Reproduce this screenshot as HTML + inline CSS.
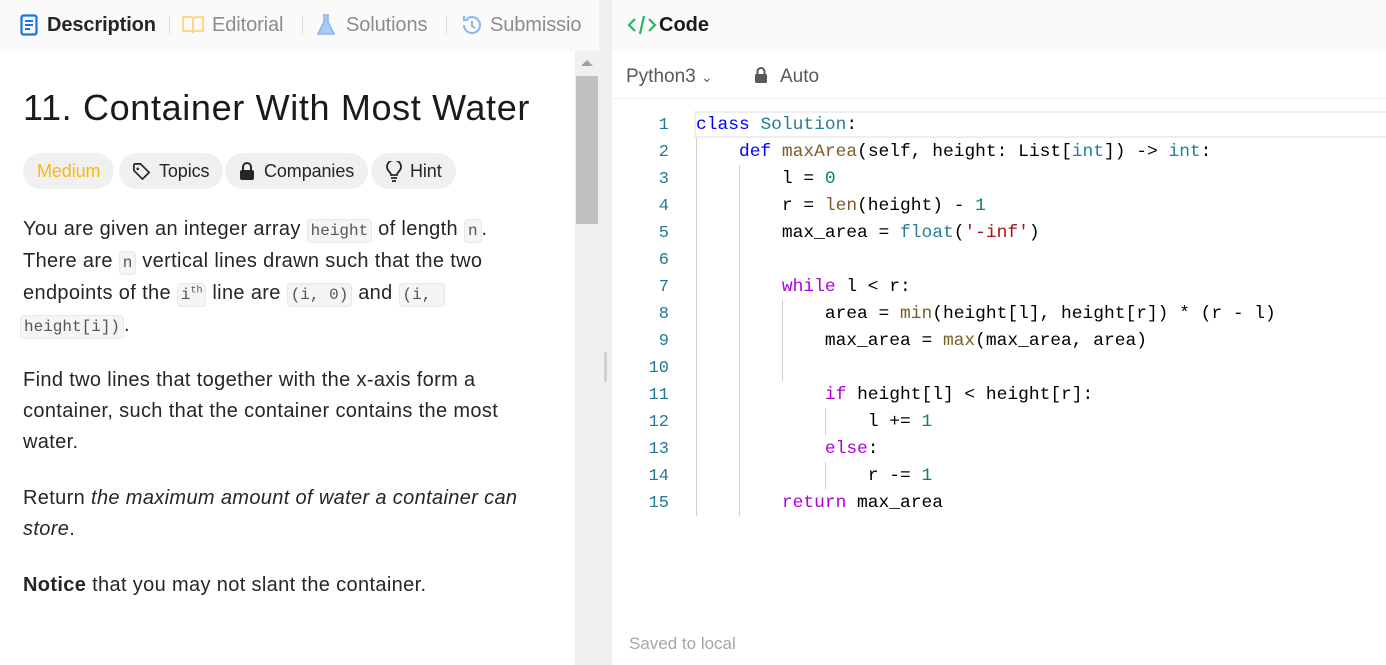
<!DOCTYPE html>
<html><head><meta charset="utf-8"><style>
*{margin:0;padding:0;box-sizing:border-box}
body{width:1386px;height:665px;overflow:hidden;background:#f0f0f0;font-family:"Liberation Sans",sans-serif;position:relative;color:#262626}
.a{position:absolute;white-space:nowrap}
.left{position:absolute;left:0;top:0;width:599px;height:665px;background:#fff}
.tabs{position:absolute;left:0;top:0;width:599px;height:51px;background:#fafafa}
.right{position:absolute;left:612px;top:0;width:774px;height:665px;background:#fff}
.rtop{position:absolute;left:0;top:0;width:774px;height:51px;background:#fafafa}
.tab{font-size:20px;color:#8c8c8c;top:14px;letter-spacing:-0.1px}
.sep{position:absolute;top:15px;width:1px;height:20px;background:#ddd}
.pill{position:absolute;top:153px;height:36px;border-radius:18px;background:#f0f0f0;font-size:18px;color:#262626;line-height:36px;padding:0 14px;letter-spacing:-0.1px}
.p{font-size:20px;letter-spacing:0.35px;color:#262626;left:23px}
code{font-family:"Liberation Mono",monospace;font-size:16px;background:#f5f5f5;border:1px solid #e8e8e8;border-radius:4px;padding:2px 3px;color:#555;letter-spacing:0}
.ln{position:absolute;left:612px;width:57px;text-align:right;font-family:"Liberation Mono",monospace;font-size:17px;color:#237893}
.cd{position:absolute;left:696px;font-family:"Liberation Mono",monospace;font-size:17.9px;color:#000;white-space:pre}
.k{color:#0000ff}.c{color:#267f99}.f{color:#795e26}.n{color:#098658}.s{color:#a31515}.m{color:#af00db}
.g{position:absolute;width:1px;background:#d0d0d0}
</style></head><body>
<div class="left">
<div class="tabs">
<svg class="a" style="left:20px;top:14px" width="18" height="22" viewBox="0 0 18 22"><rect x="1.5" y="1.5" width="15" height="19" rx="2" fill="none" stroke="#1a73e8" stroke-width="2.2"/><path d="M5 7h8M5 11h8M5 15h5" stroke="#1a73e8" stroke-width="2"/></svg>
<div class="a tab" style="left:47px;color:#262626;font-weight:600">Description</div>
<div class="sep" style="left:169px"></div>
<svg class="a" style="left:181px;top:15px" width="24" height="20" viewBox="0 0 24 20"><path d="M2 2h7c2 0 3 1 3 3v13c0-1-1-2-3-2H2zM22 2h-7c-2 0-3 1-3 3v13c0-1 1-2 3-2h7z" fill="none" stroke="#ffd37a" stroke-width="1.8"/></svg>
<div class="a tab" style="left:212px">Editorial</div>
<div class="sep" style="left:302px"></div>
<svg class="a" style="left:316px;top:13px" width="20" height="24" viewBox="0 0 20 24"><path d="M7 2h6M8 2v7L2 21h16L12 9V2" fill="#a8cdf5" stroke="#8ab8ec" stroke-width="1.6"/></svg>
<div class="a tab" style="left:346px">Solutions</div>
<div class="sep" style="left:446px"></div>
<svg class="a" style="left:460px;top:13px" width="24" height="24" viewBox="0 0 24 24"><path d="M4 12a8 8 0 1 0 3-6.2M4 3v4h4M12 8v5l3 2" fill="none" stroke="#8ab8ec" stroke-width="2"/></svg>
<div class="a tab" style="left:490px;width:92px;overflow:hidden">Submissions</div>
</div>
<div class="a" style="left:23px;top:87px;font-size:36px;font-weight:500;letter-spacing:0.65px;color:#1a1a1a">11. Container With Most Water</div>
<div class="pill" style="left:23px;color:#ffb800">Medium</div>
<div class="pill" style="left:119px;padding-left:40px">Topics<svg style="position:absolute;left:13px;top:9px" width="19" height="19" viewBox="0 0 20 20"><path d="M2 3v6l9 9 7-7-9-9H3zM6 6.5a.6.6 0 1 0 .1 0" fill="none" stroke="#262626" stroke-width="1.8"/></svg></div>
<div class="pill" style="left:225px;padding-left:39px">Companies<svg style="position:absolute;left:14px;top:9px" width="16" height="18" viewBox="0 0 16 18"><path d="M4 8V5a4 4 0 0 1 8 0v3" fill="none" stroke="#262626" stroke-width="2"/><rect x="1" y="8" width="14" height="10" rx="2" fill="#262626"/></svg></div>
<div class="pill" style="left:371px;padding-left:39px">Hint<svg style="position:absolute;left:15px;top:8px" width="16" height="21" viewBox="0 0 16 21"><path d="M5 14c0-3-4-4-4-8a7 7 0 0 1 14 0c0 4-4 5-4 8zM5 17h6M6 20h4" fill="none" stroke="#262626" stroke-width="1.8"/></svg></div>
<div class="a p" style="top:218px">You are given an integer array <code>height</code> of length <code>n</code>.</div>
<div class="a p" style="top:250px">There are <code>n</code> vertical lines drawn such that the two</div>
<div class="a p" style="top:282px">endpoints of the <code>i<sup style="font-size:10px">th</sup></code> line are <code>(i, 0)</code> and <code>(i,&nbsp;</code></div>
<div class="a p" style="top:314px"><code style="margin-left:-3px">height[i])</code>.</div>
<div class="a p" style="top:369px">Find two lines that together with the x-axis form a</div>
<div class="a p" style="top:400px">container, such that the container contains the most</div>
<div class="a p" style="top:431px">water.</div>
<div class="a p" style="top:487px">Return <i>the maximum amount of water a container can</i></div>
<div class="a p" style="top:518px"><i>store</i>.</div>
<div class="a p" style="top:574px"><b>Notice</b> that you may not slant the container.</div>
<div class="a" style="left:575px;top:51px;width:24px;height:614px;background:#f0f0f0"></div>
<div class="a" style="left:581px;top:60px;width:0;height:0;border-left:6px solid transparent;border-right:6px solid transparent;border-bottom:6px solid #a0a0a0"></div>
<div class="a" style="left:576px;top:76px;width:22px;height:148px;background:#c1c1c1"></div>
</div>
<div class="a" style="left:604px;top:352px;width:3px;height:30px;background:#d0d0d0;border-radius:2px"></div>
<div class="right">
<div class="rtop"></div>
<svg class="a" style="left:15px;top:14px" width="30" height="22" viewBox="0 0 30 22"><path d="M8 5L2 11l6 6M22 5l6 6-6 6M17 2l-4 18" fill="none" stroke="#2db55d" stroke-width="2.2"/></svg>
<div class="a" style="left:47px;top:14px;font-size:20px;font-weight:600;color:#1a1a1a">Code</div>
<div class="a" style="left:14px;top:66px;font-size:19px;color:#595959">Python3 <span style="font-size:14px">&#8964;</span></div>
<svg class="a" style="left:142px;top:67px" width="14" height="16" viewBox="0 0 14 16"><path d="M3.5 7V4.5a3.5 3.5 0 0 1 7 0V7" fill="none" stroke="#595959" stroke-width="2"/><rect x="1" y="7" width="12" height="9" rx="1.5" fill="#595959"/></svg>
<div class="a" style="left:168px;top:66px;font-size:19px;color:#595959">Auto</div>
<div class="a" style="left:0;top:98px;width:774px;height:1px;background:#eee"></div>
<div class="a" style="left:82px;top:111px;width:692px;height:27px;border:2px solid #eeeeee;border-right:none"></div>
<div class="a" style="left:17px;top:634px;font-size:17px;color:#a6a6a6">Saved to local</div>
</div>
<div class="g" style="left:696px;top:138px;height:378px"></div>
<div class="g" style="left:739px;top:165px;height:351px"></div>
<div class="g" style="left:782px;top:300px;height:81px"></div>
<div class="g" style="left:825px;top:408px;height:27px"></div>
<div class="g" style="left:825px;top:462px;height:27px"></div>
<div class="ln" style="top:116px">1</div><div class="ln" style="top:143px">2</div><div class="ln" style="top:170px">3</div><div class="ln" style="top:197px">4</div><div class="ln" style="top:224px">5</div><div class="ln" style="top:251px">6</div><div class="ln" style="top:278px">7</div><div class="ln" style="top:305px">8</div><div class="ln" style="top:332px">9</div><div class="ln" style="top:359px">10</div><div class="ln" style="top:386px">11</div><div class="ln" style="top:413px">12</div><div class="ln" style="top:440px">13</div><div class="ln" style="top:467px">14</div><div class="ln" style="top:494px">15</div>
<div class="cd" style="top:115px"><span class="k">class</span> <span class="c">Solution</span>:</div>
<div class="cd" style="top:142px">    <span class="k">def</span> <span class="f">maxArea</span>(self, height: List[<span class="c">int</span>]) -&gt; <span class="c">int</span>:</div>
<div class="cd" style="top:169px">        l = <span class="n">0</span></div>
<div class="cd" style="top:196px">        r = <span class="f">len</span>(height) - <span class="n">1</span></div>
<div class="cd" style="top:223px">        max_area = <span class="c">float</span>(<span class="s">'-inf'</span>)</div>
<div class="cd" style="top:277px">        <span class="m">while</span> l &lt; r:</div>
<div class="cd" style="top:304px">            area = <span class="f">min</span>(height[l], height[r]) * (r - l)</div>
<div class="cd" style="top:331px">            max_area = <span class="f">max</span>(max_area, area)</div>
<div class="cd" style="top:385px">            <span class="m">if</span> height[l] &lt; height[r]:</div>
<div class="cd" style="top:412px">                l += <span class="n">1</span></div>
<div class="cd" style="top:439px">            <span class="m">else</span>:</div>
<div class="cd" style="top:466px">                r -= <span class="n">1</span></div>
<div class="cd" style="top:493px">        <span class="m">return</span> max_area</div>
</body></html>
